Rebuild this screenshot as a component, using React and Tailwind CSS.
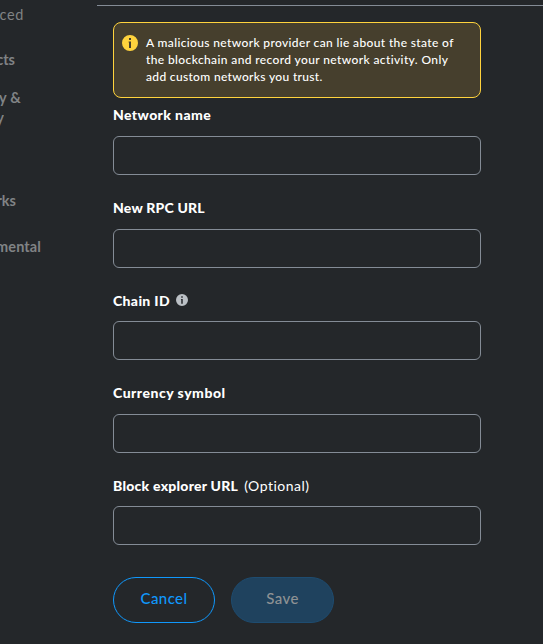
const navItems = [
  { label: 'Advanced', box: 'mt-[5px] w-6', text: 'font-normal tracking-[0.6px]' },
  { label: 'Contacts', box: 'mt-[25px] w-[15px]', text: 'font-bold tracking-normal' },
  { label: 'Security &', box: 'mt-[18px] w-[21px]', text: 'font-bold tracking-[0.2px]' },
  { label: 'privacy', box: 'w-1', text: 'font-bold tracking-normal' },
  { label: 'Networks', box: 'mt-[63px] w-4', text: 'font-bold tracking-normal' },
  { label: 'Experimental', box: 'mt-[26px] w-[41px]', text: 'font-bold tracking-[0.1px]' },
];

function InfoIcon({ className }) {
  return (
    <svg viewBox="0 0 16 16" className={className} fill="currentColor" aria-hidden="true">
      <path
        fillRule="evenodd"
        d="M8 0a8 8 0 1 0 0 16A8 8 0 0 0 8 0ZM7 3h2v2H7V3ZM6.6 6.5H9V13H7V7.5h-.4v-1Z"
      />
    </svg>
  );
}

function Field({ label, tracking, className, children }) {
  return (
    <label className={`flex flex-col ${className}`}>
      <span className="flex h-5 items-center text-[14px] leading-5 whitespace-nowrap text-white">
        <span className={`font-black ${tracking}`}>{label}</span>
        {children}
      </span>
      <input
        type="text"
        className="mt-[11px] h-[39px] w-full rounded-md border border-[#848c96] bg-transparent px-3 text-white outline-none"
      />
    </label>
  );
}

export default function App() {
  return (
    <div className="flex h-[644px] w-[543px] overflow-hidden bg-[#24272a] font-['Lato','Open_Sans',sans-serif]">
      <nav className="flex w-[97px] shrink-0 flex-col text-[14.5px] leading-5 text-[#808385]">
        {navItems.map((item) => (
          <div key={item.label} className={`flex h-5 justify-end overflow-hidden whitespace-nowrap ${item.box}`}>
            <span className={item.text}>{item.label}</span>
          </div>
        ))}
      </nav>
      <main className="flex-1 pt-[5px]">
        <div className="h-px bg-[#848c96]" />
        <div className="ml-4 w-[368px] pt-4">
          <div className="flex h-[76px] rounded-lg border border-[#ffd33d] bg-[#463f2d] pt-3 pl-2 text-white">
            <InfoIcon className="size-4 shrink-0 text-[#ffd33d]" />
            <div className="-mt-px ml-2 text-[12px] leading-[17px] font-medium whitespace-nowrap">
              <p className="tracking-[0.36px]">A malicious network provider can lie about the state of</p>
              <p className="tracking-[0.38px]">the blockchain and record your network activity. Only</p>
              <p className="tracking-[0.33px]">add custom networks you trust.</p>
            </div>
          </div>
          <Field label="Network name" tracking="tracking-[0.4px]" className="mt-[7px]" />
          <Field label="New RPC URL" tracking="tracking-[0.2px]" className="mt-[23px]" />
          <Field label="Chain ID" tracking="pt-px tracking-[0.35px]" className="mt-[22px]">
            <InfoIcon className="ml-[6px] size-3 text-[#bbc0c5]" />
          </Field>
          <Field label="Currency symbol" tracking="tracking-[0.5px]" className="mt-[23px]" />
          <Field label="Block explorer URL" tracking="pt-px tracking-[0.24px]" className="mt-[22px]">
            <span className="ml-[6px] pt-px text-[14px] tracking-[0.5px]">(Optional)</span>
          </Field>
          <div className="mt-8 flex gap-4 text-[15px] font-medium">
            <button className="flex h-[46px] w-[102px] items-center justify-center rounded-full border border-[#1098fc] pb-1 tracking-[0.4px] text-[#1098fc]">
              Cancel
            </button>
            <button className="flex h-[46px] w-[103px] items-center justify-center rounded-full border border-[#1e4c70] bg-[#1f425e] pb-1 tracking-[0.4px] text-[#8e9294]">
              Save
            </button>
          </div>
        </div>
      </main>
    </div>
  );
}
